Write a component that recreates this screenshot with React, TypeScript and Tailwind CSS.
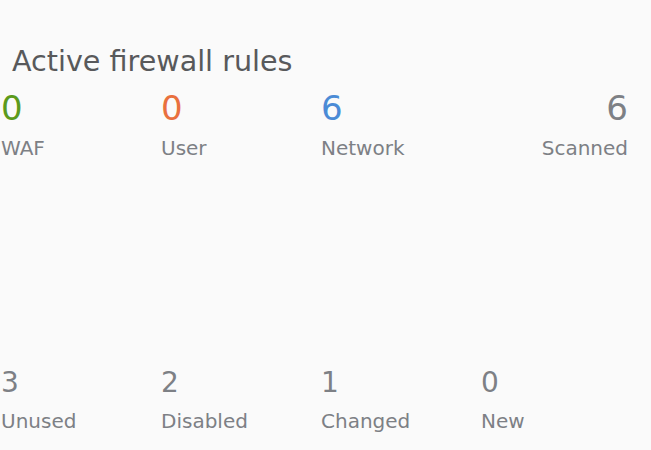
import React from "react";

const top = [
  { v: "0", l: "WAF", c: "text-[#5c9a1c]" },
  { v: "0", l: "User", c: "text-[#e9703e]" },
  { v: "6", l: "Network", c: "text-[#4b8bd6]" },
];
const bottom = [
  { v: "3", l: "Unused" },
  { v: "2", l: "Disabled" },
  { v: "1", l: "Changed" },
  { v: "0", l: "New" },
];

export default function App() {
  return (
    <div
      className="w-[651px] h-[450px] bg-[#fafafa] overflow-hidden flex flex-col"
      style={{ fontFamily: "'DejaVu Sans', 'Liberation Sans', sans-serif" }}
    >
      <div className="pt-[45px] pl-[12px] text-[28.6px] leading-[32px] text-[#58595b]">
        Active firewall rules
      </div>
      <div className="mt-[13px] grid grid-cols-[160px_160px_160px_147px] pl-[1px]">
        {top.map((t) => (
          <div key={t.l} className="flex flex-col">
            <span className={`text-[34px] leading-[36px] ${t.c}`}>{t.v}</span>
            <span className="mt-[10px] text-[20px] leading-[24px] text-[#7d8085]">{t.l}</span>
          </div>
        ))}
        <div className="flex flex-col items-end">
          <span className="text-[34px] leading-[36px] text-[#7d8085]">6</span>
          <span className="mt-[10px] text-[20px] leading-[24px] text-[#7d8085]">Scanned</span>
        </div>
      </div>
      <div className="mt-auto mb-[17px] grid grid-cols-[160px_160px_160px_160px] pl-[1px]">
        {bottom.map((b) => (
          <div key={b.l} className="flex flex-col">
            <span className="text-[28px] leading-[32px] text-[#7d8085]">{b.v}</span>
            <span className="mt-[10px] text-[20px] leading-[24px] text-[#7d8085]">{b.l}</span>
          </div>
        ))}
      </div>
    </div>
  );
}
